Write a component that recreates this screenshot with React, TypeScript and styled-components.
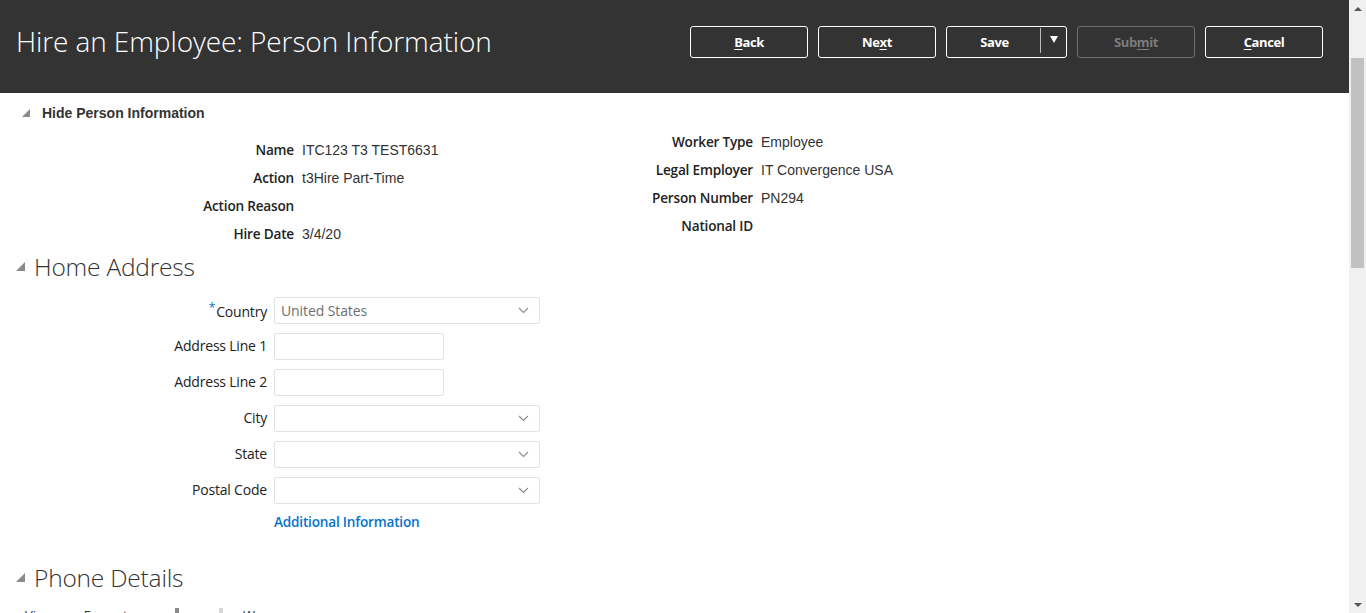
import React from "react";
import styled, { createGlobalStyle } from "styled-components";

const Global = createGlobalStyle`
  html, body { margin: 0; padding: 0; background: #fff; overflow: hidden; }
  body { font-family: "Open Sans", "Liberation Sans", sans-serif; color: #333; }
  * { box-sizing: border-box; }
`;

const Frame = styled.div`
  display: flex;
  width: 1366px;
  height: 613px;
  overflow: hidden;
`;

const Main = styled.div`
  flex: 1;
  min-width: 0;
  display: flex;
  flex-direction: column;
  overflow: hidden;
`;

const Scrollbar = styled.div`
  width: 17px;
  flex: none;
  background: #f0f0f0;
  display: flex;
  flex-direction: column;
  align-items: center;
`;

const ScrollArrow = styled.div<{ $down?: boolean }>`
  height: 17px;
  width: 17px;
  display: flex;
  align-items: center;
  justify-content: center;
  &::after {
    content: "";
    border-left: 4px solid transparent;
    border-right: 4px solid transparent;
    ${(p) => (p.$down ? "border-top: 4px solid #555;" : "border-bottom: 4px solid #555;")}
  }
`;

const ScrollTrack = styled.div`
  flex: 1;
  width: 100%;
  padding: 41px 2px 0 2px;
`;

const ScrollThumb = styled.div`
  height: 210px;
  background: #c1c1c1;
`;

const Header = styled.header`
  height: 93px;
  background: #333333;
  display: flex;
  align-items: flex-start;
  justify-content: space-between;
  padding: 0 26px 0 16px;
  flex: none;
`;

const Title = styled.h1`
  margin: 23px 0 0 0;
  font-family: "Open Sans", sans-serif;
  font-weight: 300;
  font-size: 28px;
  line-height: 36px;
  color: #fff;
  letter-spacing: -0.1px;
`;

const ButtonBar = styled.div`
  display: flex;
  gap: 10px;
  margin-top: 26px;
`;

const Button = styled.button<{ $disabled?: boolean }>`
  width: 118px;
  height: 32px;
  border: 1px solid ${(p) => (p.$disabled ? "#6e6e6e" : "#ffffff")};
  border-radius: 3px;
  background: transparent;
  color: ${(p) => (p.$disabled ? "#7c7c7c" : "#ffffff")};
  font-family: "Open Sans", sans-serif;
  font-weight: 700;
  font-size: 13px;
  letter-spacing: -0.4px;
  display: flex;
  align-items: center;
  justify-content: center;
  padding: 0 0 1px 0;
  cursor: default;
  u { text-decoration-thickness: 1px; text-underline-offset: 2px; }
`;

const SplitButton = styled.div`
  width: 121px;
  height: 32px;
  border: 1px solid #fff;
  border-radius: 3px;
  display: flex;
  align-items: center;
  color: #fff;
  font-family: "Open Sans", sans-serif;
  font-weight: 700;
  font-size: 13px;
  letter-spacing: -0.4px;
`;

const SplitMain = styled.span`
  flex: 1;
  text-align: center;
  padding: 0 0 1px 2px;
`;

const SplitDivider = styled.span`
  width: 1px;
  align-self: stretch;
  margin: 1px 0 4px 0;
  background: #bbb;
`;

const SplitArrow = styled.span`
  width: 25px;
  display: flex;
  justify-content: center;
  margin-top: -6px;
  &::after {
    content: "";
    border-left: 4px solid transparent;
    border-right: 4px solid transparent;
    border-top: 7px solid #fff;
  }
`;

const Content = styled.div`
  display: flex;
  flex-direction: column;
  padding-top: 10px;
`;

const Triangle = styled.span<{ $size: number }>`
  width: 0;
  height: 0;
  border-left: ${(p) => p.$size}px solid transparent;
  border-bottom: ${(p) => p.$size}px solid #8a8a8a;
  flex: none;
`;

const Disclosure = styled.div`
  display: flex;
  align-items: center;
  gap: 12px;
  height: 20px;
  padding-left: 22px;
  font-family: "Liberation Sans", Arial, sans-serif;
  font-weight: 700;
  font-size: 14px;
  color: #333;
`;

const InfoPanel = styled.div`
  display: flex;
  align-items: flex-start;
  margin-top: 5px;
`;

const InfoGroup = styled.div<{ $offset: number; $valueWidth: string }>`
  display: grid;
  grid-template-columns: 294px ${(p) => p.$valueWidth};
  column-gap: 8px;
  grid-auto-rows: 28px;
  align-items: center;
  margin-top: ${(p) => p.$offset}px;
`;

const InfoLabel = styled.span`
  text-align: right;
  font-family: "Open Sans", sans-serif;
  font-weight: 600;
  font-size: 13.6px;
  color: #222;
  letter-spacing: -0.2px;
  margin-top: -1px;
`;

const InfoValue = styled.span`
  font-family: "Liberation Sans", Arial, sans-serif;
  font-size: 14px;
  color: #333;
  white-space: nowrap;
`;

const SectionHeading = styled.h2<{ $top: number }>`
  margin: ${(p) => p.$top}px 0 0 0;
  display: flex;
  align-items: center;
  gap: 9px;
  padding-left: 16px;
  height: 30px;
  font-family: "Open Sans", sans-serif;
  font-weight: 300;
  font-size: 24.5px;
  color: #333;
  letter-spacing: -0.2px;
`;

const Form = styled.div`
  display: grid;
  grid-template-columns: 267px auto;
  column-gap: 7px;
  row-gap: 9px;
  grid-auto-rows: 27px;
  align-items: center;
  justify-items: start;
  margin-top: 16px;
`;

const FieldLabel = styled.label`
  justify-self: end;
  font-family: "Open Sans", sans-serif;
  font-size: 14px;
  color: #222;
  letter-spacing: -0.2px;
  margin-top: -3px;
  sup {
    color: #0572ce;
    font-size: 12px;
    position: relative;
    top: 1px;
    margin-right: 1px;
  }
`;

const Field = styled.div<{ $width: number }>`
  width: ${(p) => p.$width}px;
  height: 27px;
  border: 1px solid #dfe4e7;
  border-radius: 2px;
  background: #fff;
  display: flex;
  align-items: center;
  justify-content: space-between;
  padding: 0 10px 0 6px;
  font-family: "Open Sans", sans-serif;
  font-size: 14px;
  color: #6f6f6f;
  letter-spacing: -0.1px;
`;

const Link = styled.a`
  grid-column: 2;
  font-family: "Open Sans", sans-serif;
  font-weight: 600;
  font-size: 13.6px;
  color: #0572ce;
  text-decoration: none;
  letter-spacing: -0.2px;
  margin-top: -10px;
`;

const Toolbar = styled.div`
  display: flex;
  align-items: center;
  gap: 20px;
  padding-left: 25px;
  margin-top: 11px;
  height: 24px;
  font-family: "Open Sans", sans-serif;
  font-size: 13px;
  color: #333;
  flex: none;
`;

const ToolIcon = styled.span<{ $light?: boolean; $shift: number }>`
  width: 4px;
  height: 14px;
  margin-left: ${(p) => p.$shift}px;
  background: ${(p) => (p.$light ? "#d6d6d6" : "#8a8a8a")};
`;

const Chevron = () => (
  <svg width="11" height="7" viewBox="0 0 11 7" fill="none">
    <path d="M1 1l4.5 4.5L10 1" stroke="#8c8c8c" strokeWidth="1.1" />
  </svg>
);

const left = [
  ["Name", "ITC123 T3 TEST6631"],
  ["Action", "t3Hire Part-Time"],
  ["Action Reason", ""],
  ["Hire Date", "3/4/20"],
];
const right = [
  ["Worker Type", "Employee"],
  ["Legal Employer", "IT Convergence USA"],
  ["Person Number", "PN294"],
  ["National ID", ""],
];

export default function App() {
  return (
    <>
      <Global />
      <Frame>
        <Main>
          <Header>
            <Title>Hire an Employee: Person Information</Title>
            <ButtonBar>
              <Button><span><u>B</u>ack</span></Button>
              <Button><span>Ne<u>x</u>t</span></Button>
              <SplitButton>
                <SplitMain>Save</SplitMain>
                <SplitDivider />
                <SplitArrow />
              </SplitButton>
              <Button $disabled><span>Sub<u>m</u>it</span></Button>
              <Button><span><u>C</u>ancel</span></Button>
            </ButtonBar>
          </Header>
          <Content>
            <Disclosure>
              <Triangle $size={8} />
              Hide Person Information
            </Disclosure>
            <InfoPanel>
              <InfoGroup $offset={8} $valueWidth="157px">
                {left.map(([l, v]) => (
                  <React.Fragment key={l}>
                    <InfoLabel>{l}</InfoLabel>
                    <InfoValue>{v}</InfoValue>
                  </React.Fragment>
                ))}
              </InfoGroup>
              <InfoGroup $offset={0} $valueWidth="auto">
                {right.map(([l, v]) => (
                  <React.Fragment key={l}>
                    <InfoLabel>{l}</InfoLabel>
                    <InfoValue>{v}</InfoValue>
                  </React.Fragment>
                ))}
              </InfoGroup>
            </InfoPanel>
            <SectionHeading $top={3}>
              <Triangle $size={9} />
              Home Address
            </SectionHeading>
            <Form>
              <FieldLabel><sup>*</sup>Country</FieldLabel>
              <Field $width={266}>United States<Chevron /></Field>
              <FieldLabel>Address Line 1</FieldLabel>
              <Field $width={170} />
              <FieldLabel>Address Line 2</FieldLabel>
              <Field $width={170} />
              <FieldLabel>City</FieldLabel>
              <Field $width={266}><span /><Chevron /></Field>
              <FieldLabel>State</FieldLabel>
              <Field $width={266}><span /><Chevron /></Field>
              <FieldLabel>Postal Code</FieldLabel>
              <Field $width={266}><span /><Chevron /></Field>
              <Link href="#">Additional Information</Link>
            </Form>
            <SectionHeading $top={22}>
              <Triangle $size={9} />
              Phone Details
            </SectionHeading>
            <Toolbar>
              <span>View ▾</span>
              <span>Format ▾</span>
              <ToolIcon $shift={17} />
              <ToolIcon $light $shift={20} />
              <span>Wrap</span>
            </Toolbar>
          </Content>
        </Main>
        <Scrollbar>
          <ScrollArrow />
          <ScrollTrack>
            <ScrollThumb />
          </ScrollTrack>
          <ScrollArrow $down />
        </Scrollbar>
      </Frame>
    </>
  );
}
